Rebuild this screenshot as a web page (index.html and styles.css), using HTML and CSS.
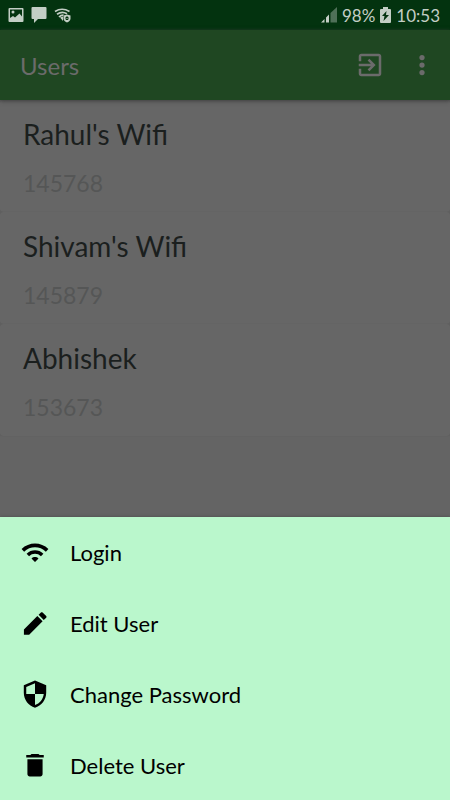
FILE: index.html
```html
<!DOCTYPE html>
<html lang="en">
<head>
<meta charset="utf-8">
<meta name="viewport" content="width=device-width, initial-scale=1">
<title>Users</title>
<link rel="stylesheet" href="styles.css">
</head>
<body>
<div class="app">
  <div class="status-bar">
    <div class="status-group notifications">
      <svg width="16" height="16" viewBox="0 0 16 16" aria-hidden="true"><path fill-rule="evenodd" d="M1.500 1h13q1 0 1 1v12q0 1-1 1h-13q-1 0-1-1V2q0-1 1-1zM2 2.500v8.500l3-2 2 1.500 4.500-4 2.500 3V2.500zM5 3.500a1.500 1.500 0 1 1 0 3 1.500 1.500 0 0 1 0-3z"/></svg>
      <svg width="16" height="16" viewBox="0 0 16 16" aria-hidden="true"><path d="M1.500 0h13q1 0 1 1v10q0 1-1 1H7l-4 4v-4H1.500q-1 0-1-1V1q0-1 1-1z"/></svg>
      <svg width="17" height="16" viewBox="0 0 17 16" aria-hidden="true"><g class="line" stroke-width="1.700"><path d="M1 4.500Q8 0 15.500 4.500M3 7.300Q8 3.800 13 6.800M5 10Q7 8 9.500 8.200"/></g><path d="M6 10.500l3-1v4.500z"/><path d="M13 7.500l3.500 1v3q0 2.500-3.500 4-3.500-1.500-3.500-4v-3z"/><path class="line dark-line" d="M12 10.500v2h2v-2zM12 10.500q1-2 2 0"/></svg>
    </div>
    <div class="status-group readings">
      <svg width="16" height="16" viewBox="0 0 16 16" aria-hidden="true"><path d="M0 15.500l3.500-3.500v3.500zM5 10.500l3-3v8H5z"/><path class="weak" d="M9.500 6L16 0v15.500H9.500z"/></svg>
      <span>98%</span>
      <svg width="11" height="16" viewBox="0 0 11 16" aria-hidden="true"><path fill-rule="evenodd" d="M3 0h5v2h2q1 0 1 1v12q0 1-1 1H1q-1 0-1-1V3q0-1 1-1h2zM6.500 4L2 9h2.500l-1 5L9 8H6z"/></svg>
      <span>10:53</span>
    </div>
  </div>
  <header class="toolbar">
    <h1 class="title">Users</h1>
    <button class="tool" type="button" aria-label="Log out"><svg width="30" height="30" viewBox="0 0 24 24" aria-hidden="true"><path d="M10.090 15.590L11.500 17l5-5-5-5-1.410 1.410L12.670 11H3v2h9.670l-2.580 2.590zM19 3H5c-1.110 0-2 .9-2 2v4h2V5h14v14H5v-4H3v4c0 1.100.89 2 2 2h14c1.100 0 2-.9 2-2V5c0-1.100-.9-2-2-2z"/></svg></button>
    <button class="tool" type="button" aria-label="More options"><svg width="30" height="30" viewBox="0 0 24 24" aria-hidden="true"><circle cx="12" cy="6" r="2.100"/><circle cx="12" cy="12" r="2.100"/><circle cx="12" cy="18" r="2.100"/></svg></button>
  </header>
  <main class="users">
    <article class="card"><h2 class="name">Rahul's Wifi</h2><p class="code">145768</p></article>
    <article class="card"><h2 class="name">Shivam's Wifi</h2><p class="code">145879</p></article>
    <article class="card"><h2 class="name">Abhishek</h2><p class="code">153673</p></article>
  </main>
  <nav class="sheet" aria-label="User actions">
    <button class="action" type="button"><svg width="28" height="28" viewBox="0 0 24 24" aria-hidden="true"><path d="M.5 9.500l2.200 2.200c5.100-5.100 13.500-5.100 18.600 0l2.200-2.200C17.200 3.200 6.800 3.200.5 9.500zm8.500 8l3 3 3-3c-1.650-1.660-4.340-1.660-6 0zm-4.200-4l2.100 2.100c2.800-2.800 7.400-2.800 10.200 0l2.100-2.100C15.200 9.500 8.800 9.500 4.800 13.500z"/></svg><span>Login</span></button>
    <button class="action" type="button"><svg width="28" height="28" viewBox="0 0 24 24" aria-hidden="true"><path d="M2.500 17.500V22H7L18.500 10.500 14 6zM21.600 7.400c.4-.4.4-1 0-1.400L18.500 3c-.4-.4-1-.4-1.400 0l-2 2 4.400 4.400z"/></svg><span>Edit User</span></button>
    <button class="action" type="button"><svg width="28" height="28" viewBox="0 0 24 24" aria-hidden="true"><path fill-rule="evenodd" d="M12 .4L2.400 4.600v6.400c0 5.900 4.100 11.400 9.600 12.700 5.500-1.300 9.600-6.800 9.600-12.700V4.600zM12 12h7.500c-.6 4.500-3.500 8.200-7.500 9.400V12H4.500V6L12 2.700z"/></svg><span>Change Password</span></button>
    <button class="action" type="button"><svg width="28" height="28" viewBox="0 0 24 24" aria-hidden="true"><path d="M5.500 19.800c0 1.100.9 2 2 2h9c1.100 0 2-.9 2-2V7h-13zM19.500 3.500H16l-1-1H9l-1 1H4.500v2h15z"/></svg><span>Delete User</span></button>
  </nav>
</div>
</body>
</html>
```
FILE: styles.css
```css
* {
  box-sizing: border-box;
}

body {
  margin: 0;
  background: #666;
  font-family: "Choco Cooky", Lato, sans-serif;
}

h1, h2, p {
  margin: 0;
  font-weight: 400;
}

button {
  margin: 0;
  border: 0;
  background: none;
  color: inherit;
  font: inherit;
  cursor: pointer;
}

svg {
  display: block;
  flex: none;
  fill: currentColor;
}

.app {
  display: flex;
  flex-direction: column;
  min-height: 100vh;
}

.status-bar {
  display: flex;
  justify-content: space-between;
  align-items: center;
  height: 30px;
  padding: 0 10px 0 8px;
  background: #03330f;
  color: #c3cec5;
  font-size: 17px;
}

.status-group {
  display: flex;
  align-items: center;
}

.notifications {
  gap: 7px;
}

.readings {
  gap: 5px;
}

.line {
  fill: none;
  stroke: currentColor;
}

.dark-line {
  stroke: #03330f;
}

.weak {
  opacity: 0.4;
}

.toolbar {
  position: relative;
  display: flex;
  align-items: center;
  height: 70px;
  padding: 0 8px 0 20px;
  background: #1f4722;
  color: #6b6b6b;
  box-shadow: 0 1px 4px #3b3b3b;
}

.title {
  flex: 1;
  font-size: 24px;
}

.tool {
  padding: 5px;
}

.tool + .tool {
  margin-left: 12px;
}

.users {
  flex: 1;
  background: #646464;
}

.card {
  display: flex;
  flex-direction: column;
  gap: 15px;
  height: 112px;
  padding: 16px 23px;
  border-radius: 3px;
  background: #666;
  box-shadow: 0 0 1px #555;
}

.name {
  color: #1b1f1e;
  font-size: 28px;
  line-height: 36px;
}

.code {
  color: #555656;
  font-size: 23px;
  line-height: 32px;
}

.sheet {
  display: flex;
  flex-direction: column;
  gap: 1px;
  background: #baf7cc;
  color: #000;
  box-shadow: 0 0 3px #4b4b4b;
}

.action {
  display: flex;
  align-items: center;
  gap: 21px;
  height: 70px;
  padding: 0 21px;
  font-size: 22px;
  text-align: left;
}
```
